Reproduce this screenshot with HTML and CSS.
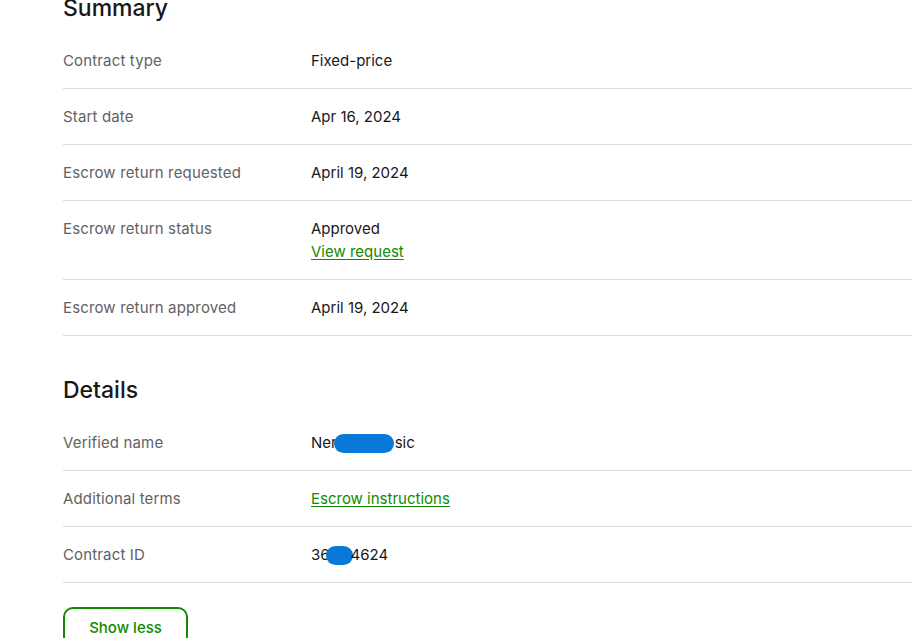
FILE: index.html
```html
<!DOCTYPE html>
<html lang="en">
<head>
<meta charset="utf-8">
<title>Contract summary</title>
<link rel="stylesheet" href="styles.css">
</head>
<body>
<main class="page">
  <section class="section section-first">
    <h2 class="heading">Summary</h2>
    <div class="row"><div class="label">Contract type</div><div class="value">Fixed-price</div></div>
    <div class="row"><div class="label">Start date</div><div class="value">Apr 16, 2024</div></div>
    <div class="row"><div class="label">Escrow return requested</div><div class="value">April 19, 2024</div></div>
    <div class="row"><div class="label">Escrow return status</div><div class="value">Approved<br><a class="link" href="#">View request</a></div></div>
    <div class="row"><div class="label">Escrow return approved</div><div class="value">April 19, 2024</div></div>
  </section>
  <section class="section">
    <h2 class="heading">Details</h2>
    <div class="row"><div class="label">Verified name</div><div class="value">Ner<span class="redact redact-name"></span>sic</div></div>
    <div class="row"><div class="label">Additional terms</div><div class="value"><a class="link" href="#">Escrow instructions</a></div></div>
    <div class="row"><div class="label">Contract ID</div><div class="value">36<span class="redact redact-id"></span>4624</div></div>
  </section>
  <button class="btn-outline" type="button">Show less</button>
</main>
</body>
</html>
```

FILE: styles.css
```css
html, body {
  margin: 0;
  padding: 0;
  background: #ffffff;
}
body {
  font-family: "Inter", "Liberation Sans", Arial, sans-serif;
  color: #181818;
  overflow: hidden;
}
.page {
  margin-left: 63px;
  margin-right: -40px;
}
.section-first {
  margin-top: -8px;
}
.section + .section {
  margin-top: 38px;
}
.heading {
  margin: 0 0 9px;
  font-size: 23px;
  line-height: 32px;
  font-weight: 500;
  color: #181818;
}
.row {
  display: grid;
  grid-template-columns: 248px 1fr;
  padding: 16px 0;
  border-bottom: 1px solid #d9d9d9;
  font-size: 15px;
  line-height: 23px;
}
.label {
  color: #626262;
  letter-spacing: 0.15px;
}
.value {
  color: #181818;
}
.link {
  color: #108a00;
  text-decoration: underline;
  text-underline-offset: 2px;
}
.redact {
  display: inline-block;
  height: 19px;
  background: #0a78d8;
  border-radius: 10px;
  vertical-align: -5px;
}
.redact-name {
  width: 60px;
  margin-left: -3px;
  margin-right: 1px;
}
.redact-id {
  width: 27px;
  margin-left: -4px;
  margin-right: -2px;
}
.btn-outline {
  margin-top: 24px;
  width: 125px;
  height: 40px;
  border: 2px solid #108a00;
  border-radius: 10px;
  background: #ffffff;
  color: #108a00;
  font-family: inherit;
  font-size: 15px;
  font-weight: 500;
}
```
